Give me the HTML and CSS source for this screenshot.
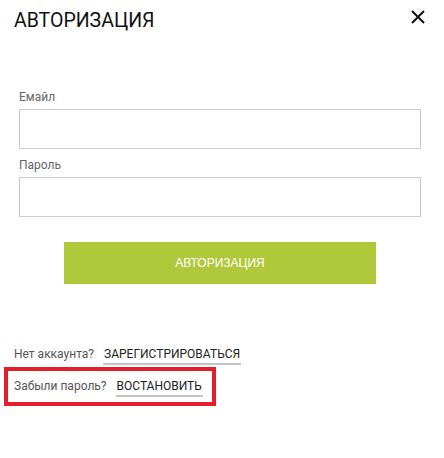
FILE: index.html
```html
<!DOCTYPE html>
<html lang="ru">
  <head>
    <meta charset="UTF-8" />
    <meta name="viewport" content="width=device-width, initial-scale=1.0" />
    <title>Авторизация</title>
    <link rel="stylesheet" href="styles.css">
  </head>
  <body>
    <div class="modal">
      <div class="modal-head">
        <h1 class="modal-title">АВТОРИЗАЦИЯ</h1>
        <button type="button" class="btn-close" aria-label="Закрыть">
          <svg width="14" height="14" viewBox="0 0 14 14">
            <path d="M1 1 L13 13 M13 1 L1 13" stroke="#111" stroke-width="2" fill="none" />
          </svg>
        </button>
      </div>

      <form class="login-form">
        <label class="field-label" for="email">Емайл</label>
        <input type="text" id="email" class="field-input" />
        <label class="field-label" for="pass">Пароль</label>
        <input type="password" id="pass" class="field-input" />
        <div class="btn-wrap">
          <button type="button" class="btn-login">АВТОРИЗАЦИЯ</button>
        </div>
      </form>

      <div class="links">
        <div class="link-row">
          <span class="link-text">Нет аккаунта?</span>
          <a href="#" class="link-action">ЗАРЕГИСТРИРОВАТЬСЯ</a>
        </div>
        <div class="link-row">
          <span class="link-text">Забыли пароль?</span>
          <a href="#" class="link-action">ВОСТАНОВИТЬ</a>
          <div class="highlight"></div>
        </div>
      </div>
    </div>
  </body>
</html>
```

FILE: styles.css
```css
body {
  margin: 0;
  background: #fff;
  font-family: Roboto, "Noto Sans", sans-serif;
  color: #222;
}
.modal {
  width: 444px;
  height: 458px;
  box-sizing: border-box;
  padding: 9px 19px 0 14px;
}
.modal-head {
  display: flex;
  justify-content: space-between;
  align-items: flex-start;
}
.modal-title {
  margin: 0;
  font-size: 19.5px;
  font-weight: 400;
  line-height: 24px;
  color: #111;
}
.btn-close {
  border: 0;
  background: none;
  padding: 0;
  margin: 1px 0 0 0;
  width: 14px;
  height: 14px;
  display: flex;
}

.login-form {
  padding: 57px 0 0 5px;
}
.field-label {
  display: block;
  font-size: 12px;
  line-height: 14px;
  color: #666;
  margin-bottom: 5px;
}
.field-input {
  display: block;
  width: 402px;
  height: 40px;
  box-sizing: border-box;
  border: 1px solid #ccc;
  margin: 0 0 9px 0;
  padding: 0 10px;
  font-family: inherit;
}
.btn-wrap {
  display: flex;
  padding: 16px 0 0 45px;
}
.btn-login {
  width: 312px;
  height: 42px;
  border: 0;
  background: #b0c93a;
  color: #fff;
  font-family: "Liberation Sans", Arial, sans-serif;
  font-size: 12px;
}

.links {
  padding-top: 62px;
}
.link-row {
  position: relative;
  display: flex;
  align-items: baseline;
  gap: 9px;
  font-size: 12px;
  line-height: 16px;
  margin-bottom: 13px;
}
.link-text {
  color: #555;
}
.link-action {
  color: #222;
  text-decoration: none;
  border-bottom: 2px solid #c4c4c4;
  padding: 0 1px 1px;
}
.highlight {
  position: absolute;
  left: -10px;
  top: -11px;
  width: 204px;
  height: 31px;
  border: 4px solid #e1202b;
}
```
